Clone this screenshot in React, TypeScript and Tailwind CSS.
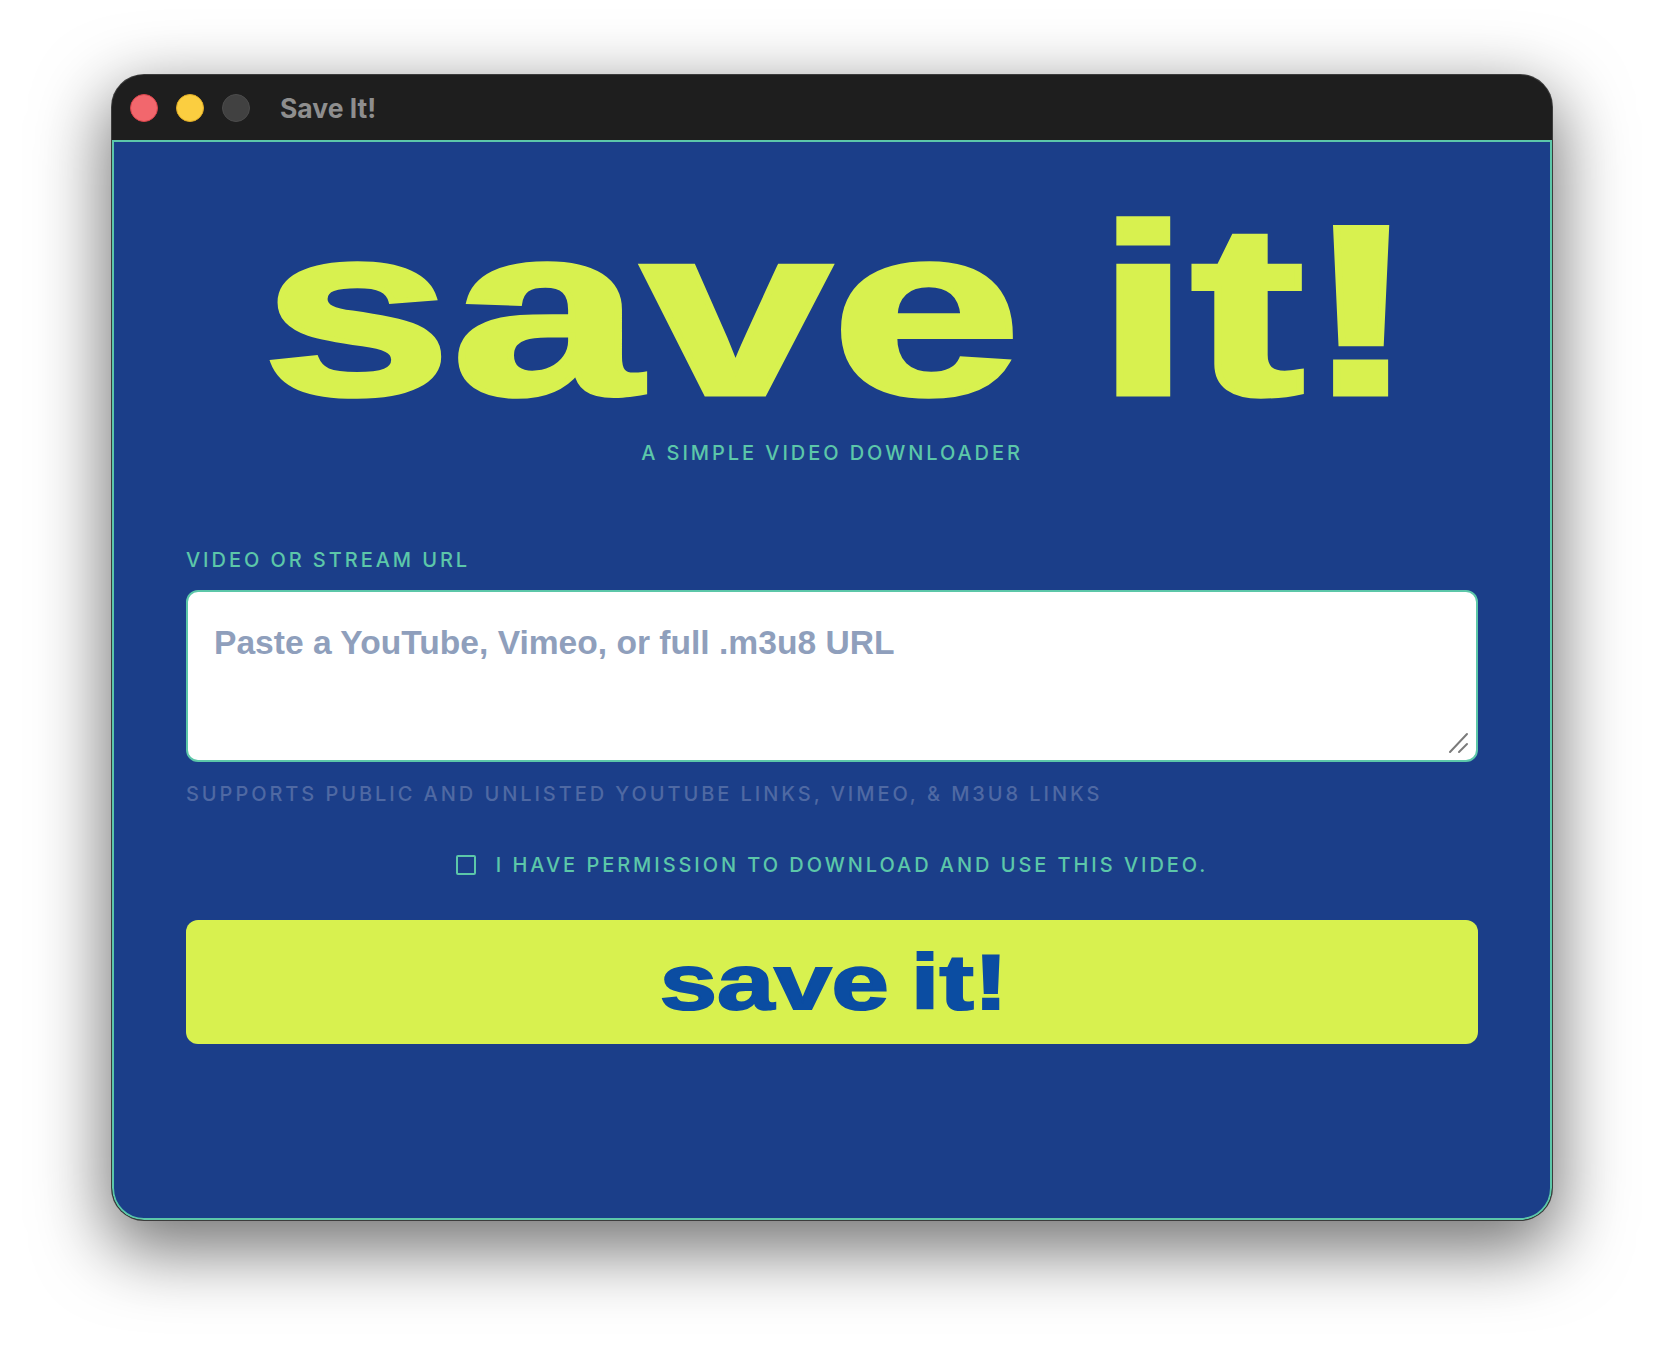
const inter = "font-['Inter',sans-serif]";
const arial = "font-['Liberation_Sans',sans-serif]";

function TrafficLights() {
  return (
    <div className="flex items-center gap-[18px]">
      <div className="w-7 h-7 rounded-full bg-[#f2676d] border border-[#d9434a]" />
      <div className="w-7 h-7 rounded-full bg-[#fbce40] border border-[#e0ad26]" />
      <div className="w-7 h-7 rounded-full bg-[#414141] border border-[#4c4c4c]" />
    </div>
  );
}

export default function App() {
  return (
    <div className={`${inter} min-h-[1368px] bg-white pt-[75px] pl-[112px] overflow-hidden`}>
      <div className="w-[1440px] h-[1145px] flex flex-col rounded-[32px] overflow-hidden bg-[#1e1e1e] ring-1 ring-[#3c3c3c] shadow-[0_24px_70px_6px_rgba(0,0,0,0.55)]">
        <div className="h-[65px] shrink-0 flex items-center pl-[18px] pt-[1px] gap-[30px]">
          <TrafficLights />
          <span className="text-[26.5px] font-bold text-[#8e8e8e] leading-none">Save It!</span>
        </div>

        <div className="flex-1 bg-[#1b3e89] border-2 border-[#5cc7a9] rounded-b-[32px] px-[72px] pt-[53px] flex flex-col items-stretch">
          <div className="h-[230px] flex justify-center overflow-visible">
            <h1 className={`${arial} inline-block ml-[17px] text-[242px] leading-[230px] font-bold text-[#d8f14f] whitespace-nowrap scale-x-[1.41] origin-center [word-spacing:-14px] [-webkit-text-stroke:5px_#d8f14f]`}>
              save it!
            </h1>
          </div>
          <p className="mt-[14px] text-center text-[20px] leading-7 font-medium tracking-[0.147em] text-[#5cc7a9]">
            A SIMPLE VIDEO DOWNLOADER
          </p>

          <label className="mt-[79px] text-[20px] leading-7 font-medium tracking-[0.147em] text-[#5cc7a9]">
            VIDEO OR STREAM URL
          </label>
          <div className="relative mt-[16px] h-[172px]">
            <textarea
              placeholder="Paste a YouTube, Vimeo, or full .m3u8 URL"
              className={`${arial} block w-full h-full resize-none bg-white border-2 border-[#5cc7a9] rounded-xl px-[26px] pt-[31px] font-bold text-[33.6px] leading-10 outline-none placeholder:text-[#8f9fbc] placeholder:opacity-100`}
            />
            <svg className="absolute right-[8px] bottom-[8px]" width="22" height="22" viewBox="0 0 22 22" fill="none" stroke="#7b7b7b" strokeWidth="2" strokeLinecap="round">
              <path d="M2 20 19 2" />
              <path d="M11 20 19 12" />
            </svg>
          </div>
          <p className="mt-[18px] text-[20px] leading-7 font-medium tracking-[0.147em] text-[#4f69a3]">
            SUPPORTS PUBLIC AND UNLISTED YOUTUBE LINKS, VIMEO, &amp; M3U8 LINKS
          </p>

          <div className="mt-[43px] flex items-center justify-center gap-[20px]">
            <div className="w-5 h-5 border-2 border-[#5cc7a9] rounded-[2px]" />
            <span className="text-[20px] leading-7 font-medium tracking-[0.147em] text-[#5cc7a9]">
              I HAVE PERMISSION TO DOWNLOAD AND USE THIS VIDEO.
            </span>
          </div>

          <button className="mt-[41px] h-[124px] rounded-xl bg-[#d8f14f] flex items-center justify-center">
            <span className={`${arial} inline-block ml-[3px] text-[78px] leading-none font-bold text-[#0b4da2] scale-x-[1.32] whitespace-nowrap [word-spacing:-5px] [-webkit-text-stroke:2px_#0b4da2]`}>
              save it!
            </span>
          </button>
        </div>
      </div>
    </div>
  );
}
